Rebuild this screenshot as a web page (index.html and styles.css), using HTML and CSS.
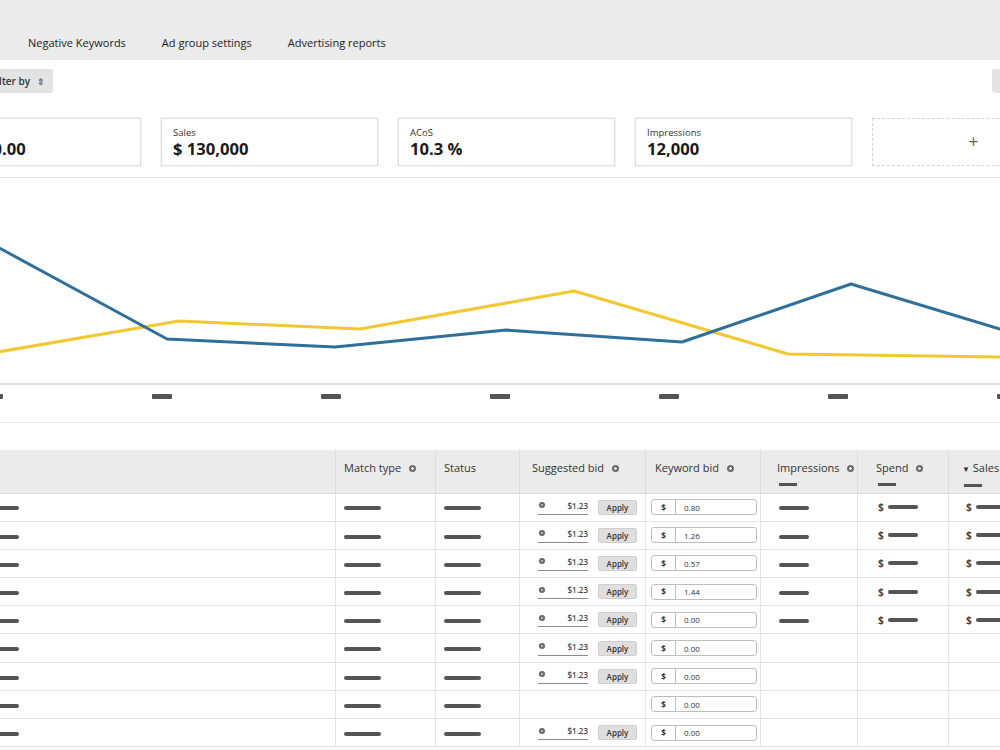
FILE: index.html
```html
<!DOCTYPE html>
<html lang="en">
<head>
    <meta charset="UTF-8">
    <meta name="viewport" content="width=device-width, initial-scale=1.0">
    <title>Ad group - Keywords</title>
    <link rel="stylesheet" href="styles.css">
</head>
<body>
    <div class="tabs">
        <div class="shell tab-row">
            <span class="tab">Keywords</span>
            <span class="tab">Negative Keywords</span>
            <span class="tab">Ad group settings</span>
            <span class="tab">Advertising reports</span>
        </div>
    </div>

    <div class="shell">
        <div class="toolbar">
            <button class="btn-filter">Filter by <span class="updown">&#8661;</span></button>
            <button class="btn-filter btn-side"></button>
        </div>

        <div class="cards">
            <div class="card"><div class="card-label">Spend</div><div class="card-value">$ 13,390.00</div></div>
            <div class="card"><div class="card-label">Sales</div><div class="card-value">$ 130,000</div></div>
            <div class="card"><div class="card-label">ACoS</div><div class="card-value">10.3 %</div></div>
            <div class="card"><div class="card-label">Impressions</div><div class="card-value">12,000</div></div>
            <div class="card card-add">+</div>
        </div>

        <div class="chart">
            <svg width="1100" height="205" viewBox="0 0 1100 205">
                <!-- sales -->
                <polyline fill="none" stroke="#f2c832" stroke-width="3" stroke-linejoin="round"
                    points="68,175 255,143 436,151 650,113 864,176 1076,179 1100,180"/>
                <!-- spend -->
                <polyline fill="none" stroke="#2f6f9a" stroke-width="3" stroke-linejoin="round"
                    points="68,66 243,161 411,169 582,152 758,164 927,106 1076,151 1100,158"/>
            </svg>
            <div class="ticks">
                <span class="tick"></span><span class="tick"></span><span class="tick"></span>
                <span class="tick"></span><span class="tick"></span><span class="tick"></span>
                <span class="tick"></span>
            </div>
        </div>

        <table class="kw-table">
            <colgroup>
                <col style="width:411px"><col style="width:100px"><col style="width:84px">
                <col style="width:126px"><col style="width:115px"><col style="width:97px">
                <col style="width:91px"><col style="width:100px">
            </colgroup>
            <thead>
                <tr>
                    <th class="c-kw">Keyword</th>
                    <th class="c-match">Match type <span class="info"></span></th>
                    <th class="c-status">Status</th>
                    <th class="c-sugg">Suggested bid <span class="info"></span></th>
                    <th class="c-bid">Keyword bid <span class="info"></span></th>
                    <th class="c-imp">Impressions <span class="info"></span><span class="sub"></span></th>
                    <th class="c-spend">Spend <span class="info"></span><span class="sub"></span></th>
                    <th class="c-sales"><span class="caret">&#9660;</span> Sales <span class="sub"></span></th>
                </tr>
            </thead>
            <tbody id="rows"></tbody>
        </table>
    </div>

    <script>
        // keyword bids; rows with stats show impressions / spend / sales
        const rows = [
            { bid: '0.80', suggest: true, stats: true },
            { bid: '1.26', suggest: true, stats: true },
            { bid: '0.57', suggest: true, stats: true },
            { bid: '1.44', suggest: true, stats: true },
            { bid: '0.00', suggest: true, stats: true },
            { bid: '0.00', suggest: true, stats: false },
            { bid: '0.00', suggest: true, stats: false },
            { bid: '0.00', suggest: false, stats: false },
            { bid: '0.00', suggest: true, stats: false }
        ];

        const body = document.getElementById('rows');
        rows.forEach(r => {
            const sugg = r.suggest
                ? `<span class="suggest"><span class="dot"></span><span>$1.23</span></span><button class="apply">Apply</button>`
                : '';
            const imp = r.stats ? '<span class="dash dash-md"></span>' : '';
            const spend = r.stats ? '<span class="cur">$</span><span class="dash dash-md"></span>' : '';
            body.insertAdjacentHTML('beforeend', `
                <tr>
                    <td class="c-kw"><span class="dash dash-kw"></span></td>
                    <td class="c-match"><span class="dash dash-lg"></span></td>
                    <td class="c-status"><span class="dash dash-lg"></span></td>
                    <td class="c-sugg">${sugg}</td>
                    <td class="c-bid"><span class="bid-input"><span class="pre">$</span><span class="val">${r.bid}</span></span></td>
                    <td class="c-imp">${imp}</td>
                    <td class="c-spend">${spend}</td>
                    <td class="c-sales">${spend}</td>
                </tr>`);
        });
    </script>
</body>
</html>
```

FILE: styles.css
```css
body {
    font-family: "Open Sans", Arial, sans-serif;
    margin: 0;
    color: #222;
    background-color: #ffffff;
    overflow: hidden;
}
.shell {
    width: 1100px;
    margin-left: -76px;
}
.tabs {
    height: 60px;
    background-color: #ebebeb;
}
.tab-row {
    display: flex;
    gap: 36px;
    padding-top: 34px;
    padding-left: 18px;
    box-sizing: border-box;
}
.tab {
    font-size: 11px;
    line-height: 18px;
    color: #222;
}
.toolbar {
    display: flex;
    justify-content: space-between;
    margin-top: 9px;
    padding-left: 59px;
}
.btn-filter {
    height: 24px;
    padding: 0 8px;
    border: none;
    border-radius: 3px;
    background-color: #e3e3e3;
    font-family: inherit;
    font-size: 10px;
    font-weight: 600;
    color: #333;
}
.updown {
    margin-left: 4px;
    font-size: 9px;
    color: #777;
}
.btn-side {
    width: 32px;
}
.cards {
    display: flex;
    gap: 20px;
    margin-top: 25px;
}
.card {
    flex: 0 0 217px;
    height: 48px;
    box-sizing: border-box;
    padding: 7px 11px;
    border: 1px solid #e0e0e0;
    box-shadow: 0 0 0 1px #f2f2f2;
}
.card-label {
    font-size: 9.5px;
    line-height: 13px;
    color: #333;
}
.card-value {
    font-size: 16.6px;
    font-weight: 700;
    line-height: 20px;
    color: #1a1a1a;
}
.card-add {
    border: 1px dashed #d4d4d4;
    box-shadow: none;
    display: flex;
    align-items: center;
    justify-content: center;
    font-size: 18px;
    color: #666;
    padding: 0 14px 2px 0;
}
.chart {
    margin-top: 11px;
    border-top: 1px solid #e6e6e6;
    border-bottom: 1px solid #ebebeb;
}
.chart svg {
    display: block;
    border-bottom: 2px solid #dedede;
}
.ticks {
    display: flex;
    gap: 149px;
    height: 37px;
    box-sizing: border-box;
    padding: 9px 0 0 59px;
}
.tick {
    flex: 0 0 20px;
    height: 5px;
    border-radius: 1px;
    background-color: #555;
}
.kw-table {
    margin-top: 27px;
    table-layout: fixed;
    border-collapse: collapse;
    width: 1124px;
}
.kw-table th {
    height: 43px;
    box-sizing: border-box;
    padding-top: 11px;
    vertical-align: top;
    text-align: left;
    font-size: 11px;
    font-weight: 400;
    line-height: 14px;
    color: #333;
    background-color: #ebebeb;
    border: 1px solid #dcdcdc;
    border-top: none;
}
.kw-table td {
    height: 28.2px;
    padding-top: 0;
    padding-bottom: 0;
    box-sizing: border-box;
    border: 1px solid #e3e3e3;
    border-top: none;
    white-space: nowrap;
    font-size: 8px;
}
.info {
    display: inline-block;
    width: 7px;
    height: 7px;
    margin-left: 5px;
    vertical-align: 0;
    border-radius: 50%;
    background: radial-gradient(circle, #ebebeb 0 1px, #6d6d6d 1.5px);
}
.sub {
    display: block;
    width: 18px;
    height: 3px;
    margin-top: 8px;
    margin-left: 2px;
    background-color: #555;
}
.caret {
    font-size: 8px;
    color: #333;
}
.c-kw { padding-left: 8px; }
.c-match, .c-status { padding-left: 8px; }
.c-sugg { padding-left: 12px; }
.c-bid { padding-left: 9px; }
.c-imp { padding-left: 16px; }
.c-spend { padding-left: 18px; }
.c-sales { padding-left: 13px; }
td.c-sugg { padding-left: 18px; }
td.c-bid { padding-left: 5px; }
td.c-imp { padding-left: 18px; }
td.c-spend { padding-left: 20px; }
td.c-sales { padding-left: 17px; }
.dash {
    display: inline-block;
    height: 4px;
    border-radius: 2px;
    background-color: #555;
    vertical-align: middle;
}
.dash-kw {
    width: 30px;
    margin-left: 56px;
}
.dash-lg { width: 37px; }
.dash-md { width: 30px; }
.cur {
    font-size: 10px;
    font-weight: 700;
    color: #444;
    vertical-align: middle;
    margin-right: 4px;
}
.suggest {
    display: inline-flex;
    justify-content: space-between;
    align-items: center;
    width: 50px;
    padding-bottom: 3px;
    border-bottom: 1.5px solid #8a8a8a;
    font-weight: 600;
    color: #444;
    vertical-align: middle;
}
.dot {
    width: 6px;
    height: 6px;
    margin-left: 1px;
    border-radius: 50%;
    background: radial-gradient(circle, #bbb 0 1px, #666 1.5px);
}
.apply {
    width: 39px;
    height: 15px;
    margin-left: 10px;
    padding: 0;
    border: 1px solid #cfcfcf;
    border-radius: 2px;
    background-color: #dedede;
    font-family: inherit;
    font-size: 8px;
    font-weight: 600;
    color: #333;
    vertical-align: middle;
}
.bid-input {
    display: inline-flex;
    align-items: center;
    width: 106px;
    height: 16px;
    box-sizing: border-box;
    border: 1px solid #bdbdbd;
    border-radius: 3px;
    vertical-align: middle;
}
.bid-input .pre {
    width: 23px;
    height: 100%;
    display: flex;
    align-items: center;
    justify-content: center;
    border-right: 1px solid #bdbdbd;
    font-weight: 700;
    color: #333;
}
.bid-input .val {
    padding-left: 8px;
    color: #333;
}
```
